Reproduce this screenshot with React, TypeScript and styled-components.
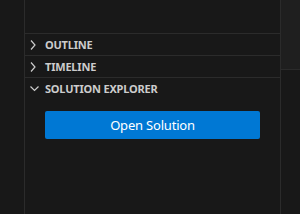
import React from 'react';
import styled, { createGlobalStyle } from 'styled-components';

const colors = {
  sideBar: '#181818',
  editor: '#1f1f1f',
  border: '#2b2b2b',
  header: '#cccccc',
  button: '#0078d4',
  buttonText: '#ffffff',
};

const GlobalStyle = createGlobalStyle`
  html, body {
    margin: 0;
    padding: 0;
    background: ${colors.sideBar};
  }
  body {
    font-family: "Noto Sans", "Open Sans", sans-serif;
  }
`;

const Workbench = styled.div`
  display: flex;
  flex-direction: row;
  width: 300px;
  height: 214px;
  overflow: hidden;
  background-color: ${colors.sideBar};
`;

const ActivityBar = styled.div`
  width: 24px;
  flex-shrink: 0;
  border-right: 1px solid ${colors.border};
`;

const SideBar = styled.div`
  display: flex;
  flex-direction: column;
  width: 255px;
  flex-shrink: 0;
  border-right: 1px solid ${colors.border};
`;

const EmptyPane = styled.div`
  height: 33px;
`;

const PaneHeader = styled.div`
  display: flex;
  flex-direction: row;
  align-items: center;
  height: 21px;
  padding-left: 2px;
  border-top: 1px solid ${colors.border};
  color: ${colors.header};
  font-size: 11px;
  font-weight: 700;
  cursor: pointer;
`;

const Twisty = styled.svg`
  display: block;
  width: 16px;
  height: 16px;
  margin-right: 2px;
  flex-shrink: 0;
`;

const Title = styled.span`
  line-height: 21px;
  white-space: nowrap;
  letter-spacing: -0.2px;
`;

const PaneBody = styled.div`
  display: flex;
  flex-direction: column;
  padding: 12px 20px 0 20px;
  flex: 1;
`;

const Button = styled.button`
  display: flex;
  align-items: center;
  justify-content: center;
  height: 28px;
  width: 100%;
  padding: 0;
  border: none;
  border-radius: 2px;
  background-color: ${colors.button};
  color: ${colors.buttonText};
  font-family: "Noto Sans", "Open Sans", sans-serif;
  font-size: 13px;
  letter-spacing: -0.2px;
  cursor: pointer;
`;

const RightColumn = styled.div`
  display: flex;
  flex-direction: column;
  flex: 1;
`;

const Editor = styled.div`
  height: 69px;
  background-color: ${colors.editor};
  border-bottom: 1px solid ${colors.border};
`;

const Chevron = ({ open }: { open?: boolean }) => (
  <Twisty viewBox="0 0 16 16" fill="none">
    {open ? (
      <polyline
        points="3.5,5.5 7.5,9.5 11.5,5.5"
        stroke={colors.header}
        strokeWidth="1.2"
      />
    ) : (
      <polyline
        points="4,3.5 8,8 4,12.5"
        stroke={colors.header}
        strokeWidth="1.2"
      />
    )}
  </Twisty>
);

type Section = { title: string; open?: boolean };

const sections: Section[] = [
  { title: 'OUTLINE' },
  { title: 'TIMELINE' },
  { title: 'SOLUTION EXPLORER', open: true },
];

const App = () => (
  <>
    <GlobalStyle />
    <Workbench>
      <ActivityBar />
      <SideBar>
        <EmptyPane />
        {sections.map((section) => (
          <PaneHeader key={section.title}>
            <Chevron open={section.open} />
            <Title>{section.title}</Title>
          </PaneHeader>
        ))}
        <PaneBody>
          <Button>Open Solution</Button>
        </PaneBody>
      </SideBar>
      <RightColumn>
        <Editor />
      </RightColumn>
    </Workbench>
  </>
);

export default App;
